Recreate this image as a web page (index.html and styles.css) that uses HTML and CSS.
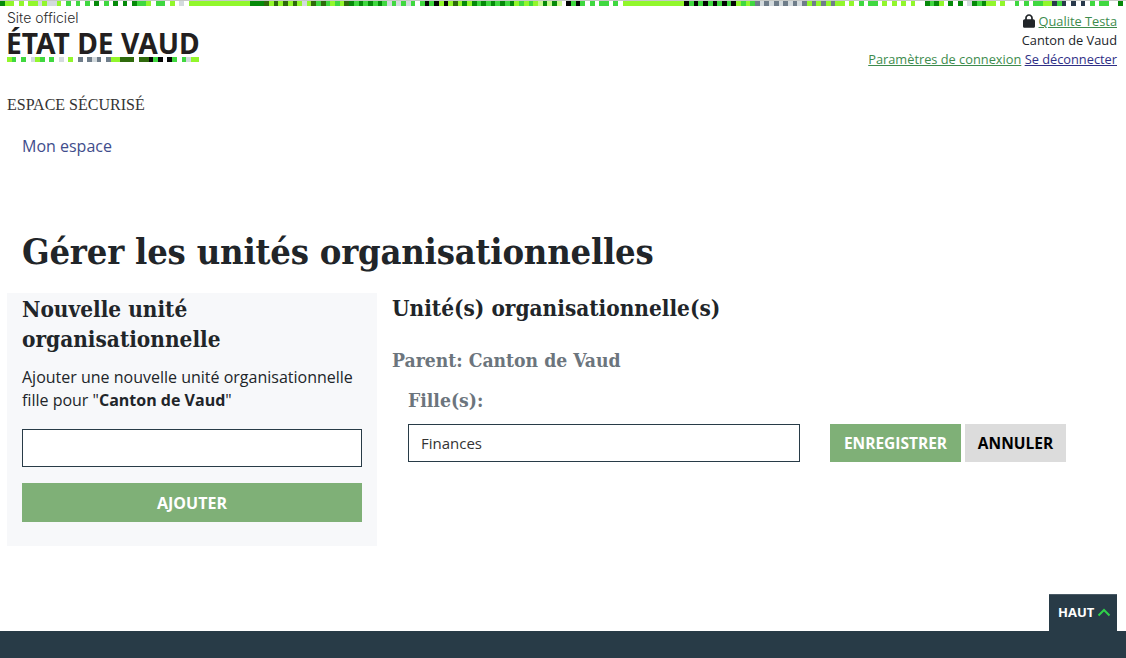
FILE: index.html
```html
<!DOCTYPE html>
<html lang="fr">
<head>
    <meta charset="UTF-8">
    <meta name="viewport" content="width=device-width, initial-scale=1.0">
    <title>Gérer les unités organisationnelles</title>
    <link rel="stylesheet" href="styles.css">
</head>
<body>
    <div class="pixels top-pixels" data-cells="dggwgwggcgccgwmwmwmwdwmwdwdwdmmgwmmwgwcwgggggggggggggdddkgkgkgkgcgkmkmgmgkdmdmdmdmcmcmcmwmbmbgbgkgdgdmdmdmdmdgmgmgpdpdpwbmbmwmwmmwmwgggggggggggggbmbmbmbmbmbgmgmscscscscscsgsgsgsggwgwmwmmwgwgwgwgwwdmdgwdwdwcdmdggwgwwmwmwmmggnmnwnwnwmwmmwwdwdwm"></div>

    <header class="site-header">
        <div class="brand">
            <span class="site-official">Site officiel</span>
            <span class="site-name">ÉTAT DE VAUD</span>
            <div class="pixels logo-pixels" data-cells="gmwmwcgmwmwcwgwswscswsggkkkwkkbmbwbmwmcgg"></div>
        </div>
        <div class="user-links">
            <div>
                <svg class="lock" viewBox="0 0 448 512" aria-hidden="true"><path d="M144 144v48h160v-48c0-44.200-35.800-80-80-80s-80 35.800-80 80zM80 192v-48C80 64.500 144.500 0 224 0s144 64.500 144 144v48h16c35.300 0 64 28.700 64 64v192c0 35.300-28.700 64-64 64H64c-35.300 0-64-28.700-64-64V256c0-35.300 28.700-64 64-64h16z"/></svg>
                <a href="#" class="link-green">Qualite Testa</a>
            </div>
            <div>Canton de Vaud</div>
            <div>
                <a href="#" class="link-green">Paramètres de connexion</a>
                <a href="#" class="link-blue">Se déconnecter</a>
            </div>
        </div>
    </header>

    <div class="secure-title">ESPACE SÉCURISÉ</div>
    <nav class="main-nav"><a href="#">Mon espace</a></nav>

    <h1>Gérer les unités organisationnelles</h1>

    <main class="columns">
        <section class="new-unit">
            <h2>Nouvelle unité organisationnelle</h2>
            <p>Ajouter une nouvelle unité organisationnelle fille pour "<strong>Canton de Vaud</strong>"</p>
            <input type="text" class="field">
            <button class="btn btn-green btn-block">Ajouter</button>
        </section>

        <section class="units">
            <h3>Unité(s) organisationnelle(s)</h3>
            <h4 class="parent">Parent: Canton de Vaud</h4>
            <div class="children">
                <h4>Fille(s):</h4>
                <div class="child-row">
                    <input type="text" class="field child-field" value="Finances">
                    <button class="btn btn-green">Enregistrer</button>
                    <button class="btn btn-grey">Annuler</button>
                </div>
            </div>
        </section>
    </main>

    <footer class="site-footer">
        <a href="#" class="back-top">
            HAUT
            <svg viewBox="0 0 14 9" aria-hidden="true"><path d="M1.500 7.500 7 2l5.500 5.500"/></svg>
        </a>
    </footer>

    <script src="pixels.js"></script>
</body>
</html>
```

FILE: styles.css
```css
:root {
    --slab: "DejaVu Serif Condensed", "DejaVu Serif", serif;
    --dark: #212529;
    --navy: #283b47;
    --green: #7fb077;
}

* {
    box-sizing: border-box;
}

body {
    margin: 0;
    min-height: 100vh;
    display: flex;
    flex-direction: column;
    background: #fff;
    font-family: "Open Sans", sans-serif;
    font-size: 16px;
    color: var(--dark);
}

/* pixel strips */
.pixels {
    display: flex;
    overflow: hidden;
}

.pixels i {
    flex: 0 0 4.72px;
}

.top-pixels {
    height: 6px;
    border-top: 1px solid #c6c9c6;
}

.logo-pixels {
    height: 5px;
    width: 192px;
}

.c-w { background: #fff; }
.c-g { background: #92f72c; }
.c-p { background: #c6f98c; }
.c-m { background: #40d840; }
.c-d { background: #068a0a; }
.c-k { background: #2f6a0c; }
.c-c { background: #d3dadd; }
.c-s { background: #6f7d8a; }
.c-n { background: #2a3a4c; }
.c-b { background: #050505; }

/* header */
.site-header {
    display: flex;
    justify-content: space-between;
    padding: 0 9px 0 7px;
}

.brand {
    display: flex;
    flex-direction: column;
    width: 192px;
}

.site-official {
    margin-top: 3px;
    font-family: Inter, sans-serif;
    font-size: 14px;
    font-weight: 300;
    line-height: 18px;
    color: #2b2b2b;
}

.site-name {
    height: 30px;
    margin-left: -1px;
    padding-top: 2px;
    font-family: "Noto Sans", sans-serif;
    font-size: 28.200px;
    font-weight: 700;
    line-height: 28px;
    white-space: nowrap;
    color: #231f20;
}

.user-links {
    padding-top: 6px;
    font-size: 12.800px;
    line-height: 19px;
    text-align: right;
}

.lock {
    width: 12px;
    height: 14px;
    vertical-align: -2px;
    fill: var(--dark);
}

.link-green {
    color: #3d8b4d;
}

.link-blue {
    color: #2f2f86;
}

.secure-title {
    margin-top: 24px;
    padding-left: 7px;
    font-family: "Liberation Serif", serif;
    font-size: 16px;
    line-height: 24px;
    color: #333;
}

.main-nav {
    margin-top: 17px;
    padding-left: 22px;
    line-height: 24px;
}

.main-nav a {
    color: #3f4d8c;
    text-decoration: none;
}

h1, h2, h3, h4 {
    margin: 0;
    font-family: var(--slab);
}

h1 {
    margin-top: 70px;
    padding-left: 22px;
    font-size: 36px;
    line-height: 46px;
    letter-spacing: -0.2px;
}

/* columns */
.columns {
    display: flex;
    gap: 15px;
    margin-top: 19px;
    padding-left: 7px;
}

.new-unit {
    flex: 0 0 370px;
    height: 253px;
    padding: 1px 15px 0;
    background: #f7f8fa;
}

.new-unit h2,
.units h3 {
    font-size: 22.400px;
    line-height: 30px;
}

.new-unit p {
    margin: 12px 0 17px;
    line-height: 23px;
}

.field {
    display: block;
    height: 38px;
    padding: 0 12px;
    border: 1px solid var(--navy);
    border-radius: 0;
    background: #fff;
    font-family: inherit;
    font-size: 15px;
    color: #333;
}

.new-unit .field {
    width: 100%;
}

.btn {
    height: 38px;
    border: 0;
    font-family: inherit;
    font-size: 15.500px;
    font-weight: 700;
    text-transform: uppercase;
}

.btn-block {
    display: block;
    width: 100%;
    height: 39px;
    margin-top: 16px;
    font-size: 16px;
}

.btn-green {
    background: var(--green);
    color: #fff;
}

.btn-grey {
    background: #dcdcdc;
    color: #000;
}

.units h4 {
    font-size: 19.200px;
    line-height: 26px;
    color: #6c757d;
}

.parent {
    margin-top: 25px;
}

.children {
    margin-top: 14px;
    padding-left: 16px;
}

.child-row {
    display: flex;
    margin-top: 10px;
}

.child-field {
    width: 392px;
    margin-right: 30px;
}

.child-row .btn-green {
    width: 131px;
    margin-right: 4px;
}

.child-row .btn-grey {
    width: 101px;
}

/* footer */
.site-footer {
    position: relative;
    height: 27px;
    margin-top: auto;
    background: var(--navy);
}

.back-top {
    position: absolute;
    right: 9px;
    bottom: 100%;
    display: flex;
    align-items: center;
    gap: 3px;
    width: 68px;
    height: 37px;
    padding: 0 0 2px 9px;
    border-top: 1px solid #4a5b66;
    background: var(--navy);
    font-size: 13px;
    font-weight: 700;
    color: #fff;
    text-decoration: none;
}

.back-top svg {
    width: 14px;
    height: 9px;
    fill: none;
    stroke: #2fd24a;
    stroke-width: 2;
}
```

FILE: pixels.js
```js
// build the coloured strips from their data-cells strings
document.querySelectorAll('.pixels').forEach(strip => {
    strip.dataset.cells.split('').forEach(code => {
        const cell = document.createElement('i');
        cell.className = `c-${code}`;
        strip.appendChild(cell);
    });
});
```
